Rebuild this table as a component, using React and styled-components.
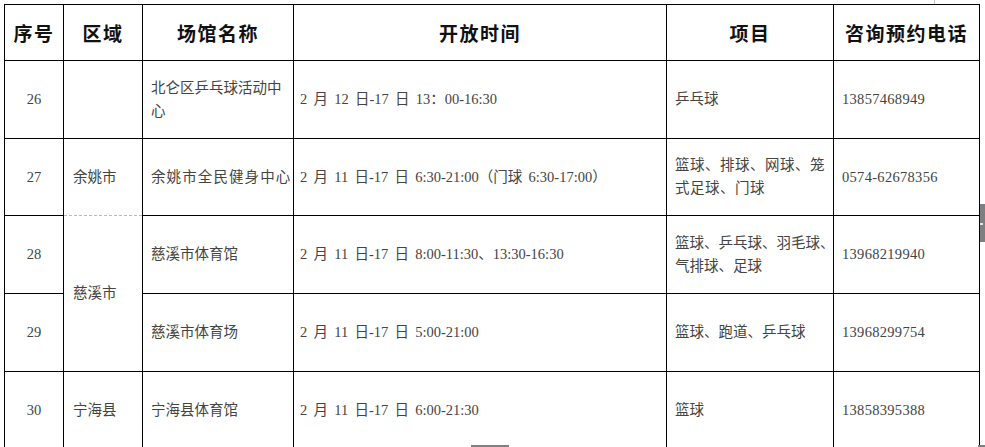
import React from 'react';
import styled, { createGlobalStyle } from 'styled-components';

const GlobalStyle = createGlobalStyle`
  html, body {
    margin: 0;
    padding: 0;
    background: #fff;
  }
`;

const Page = styled.div`
  position: relative;
  width: 985px;
  height: 447px;
  padding: 4px 0 0 4px;
  box-sizing: border-box;
  overflow: hidden;
  background: #fff;
`;

const Table = styled.table`
  width: 975px;
  border-collapse: collapse;
  table-layout: fixed;
  font-family: "Liberation Serif", "Noto Sans CJK SC", serif;
  font-size: 14.5px;
  color: #444;
`;

const HeadCell = styled.th`
  height: 55px;
  border: 1px solid #000;
  padding: 0;
  font-family: "Noto Sans CJK SC", sans-serif;
  font-size: 19px;
  font-weight: 700;
  letter-spacing: 1.5px;
  color: #111;
  text-align: center;
  vertical-align: middle;
`;

const Cell = styled.td`
  height: ${(p) => p.$h || 76}px;
  border: 1px solid #000;
  padding: 0 ${(p) => (p.$center ? 0 : 8)}px 0 ${(p) => (p.$center ? 0 : p.$pl || 8)}px;
  text-align: ${(p) => (p.$center ? 'center' : 'left')};
  vertical-align: middle;
  line-height: 23px;
  white-space: nowrap;
  letter-spacing: ${(p) => p.$spread || 0}px;
  word-spacing: ${(p) => p.$gap || 0}px;
  border-top-style: ${(p) => (p.$dashTop ? 'dashed' : 'solid')};
  border-top-color: ${(p) => (p.$dashTop ? '#bbb' : '#000')};
  border-bottom-style: ${(p) => (p.$dashBottom ? 'dashed' : 'solid')};
  border-bottom-color: ${(p) => (p.$dashBottom ? '#bbb' : '#000')};
`;

const TimeCell = styled(Cell).attrs({ $pl: 6, $gap: 2.6 })``;
const PhoneCell = styled(Cell).attrs({ $spread: 0.3 })``;

const SideTab = styled.div`
  position: absolute;
  right: 0;
  top: 204px;
  width: 5px;
  height: 38px;
  background: #7d8082;
  &::after {
    content: '';
    position: absolute;
    left: 0;
    top: 19px;
    width: 3px;
    height: 2px;
    background: #e6e6e6;
  }
`;

const BottomTab = styled.div`
  position: absolute;
  left: ${(p) => p.$x}px;
  bottom: 0;
  width: ${(p) => p.$w}px;
  height: 2px;
  background: #7d8082;
`;

const TopTick = styled.div`
  position: absolute;
  left: 934px;
  top: 0;
  width: 1px;
  height: 4px;
  background: #c8c8c8;
`;

const cols = [59, 79, 151, 373, 167, 146];
const heads = ['序号', '区域', '场馆名称', '开放时间', '项目', '咨询预约电话'];

export default function App() {
  return (
    <>
      <GlobalStyle />
      <Page>
        <TopTick />
        <Table>
          <colgroup>
            {cols.map((w, i) => (
              <col key={i} style={{ width: w }} />
            ))}
          </colgroup>
          <thead>
            <tr>
              {heads.map((h) => (
                <HeadCell key={h}>{h}</HeadCell>
              ))}
            </tr>
          </thead>
          <tbody>
            <tr>
              <Cell $h={77} $center>26</Cell>
              <Cell $h={77} />
              <Cell $h={77}>
                北仑区乒乓球活动中
                <br />心
              </Cell>
              <TimeCell $h={77}>2 月 12 日-17 日 13：00-16:30</TimeCell>
              <Cell $h={77}>乒乓球</Cell>
              <PhoneCell $h={77}>13857468949</PhoneCell>
            </tr>
            <tr>
              <Cell $center>27</Cell>
              <Cell $pl={9} $dashBottom>余姚市</Cell>
              <Cell $spread={1.1}>余姚市全民健身中心</Cell>
              <TimeCell>2 月 11 日-17 日 6:30-21:00（门球 6:30-17:00）</TimeCell>
              <Cell $spread={0.5}>
                篮球、排球、网球、笼
                <br />式足球、门球
              </Cell>
              <PhoneCell>0574-62678356</PhoneCell>
            </tr>
            <tr>
              <Cell $h={77} $center>28</Cell>
              <Cell $pl={9} rowSpan={2} $dashTop>慈溪市</Cell>
              <Cell $h={77}>慈溪市体育馆</Cell>
              <TimeCell $h={77}>2 月 11 日-17 日 8:00-11:30、13:30-16:30</TimeCell>
              <Cell $h={77}>
                篮球、乒乓球、羽毛球、
                <br />气排球、足球
              </Cell>
              <PhoneCell $h={77}>13968219940</PhoneCell>
            </tr>
            <tr>
              <Cell $h={77} $center>29</Cell>
              <Cell $h={77}>慈溪市体育场</Cell>
              <TimeCell $h={77}>2 月 11 日-17 日 5:00-21:00</TimeCell>
              <Cell $h={77}>篮球、跑道、乒乓球</Cell>
              <PhoneCell $h={77}>13968299754</PhoneCell>
            </tr>
            <tr>
              <Cell $center>30</Cell>
              <Cell $pl={9}>宁海县</Cell>
              <Cell>宁海县体育馆</Cell>
              <TimeCell>2 月 11 日-17 日 6:00-21:30</TimeCell>
              <Cell>篮球</Cell>
              <PhoneCell>13858395388</PhoneCell>
            </tr>
          </tbody>
        </Table>
        <SideTab />
        <BottomTab $x={471} $w={38} />
        <BottomTab $x={978} $w={7} />
      </Page>
    </>
  );
}
